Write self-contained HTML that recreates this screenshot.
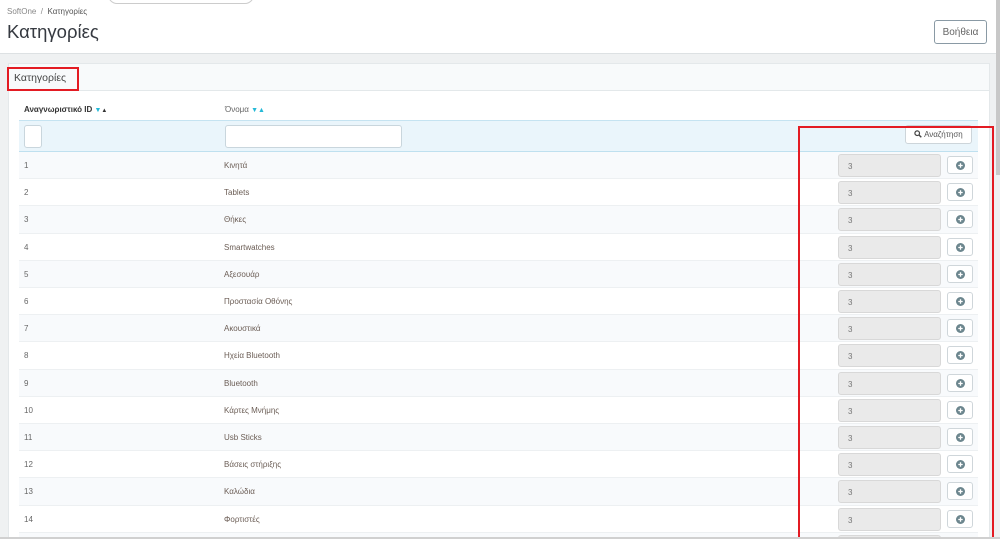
<!DOCTYPE html>
<html><head><meta charset="utf-8"><style>
*{box-sizing:border-box;margin:0;padding:0}
html,body{width:1000px;height:539px;overflow:hidden}
body{background:#eff1f2;font-family:"Liberation Sans",sans-serif;position:relative;color:#555}
.top{position:absolute;left:0;top:0;width:1000px;height:54px;background:#fff;border-bottom:1px solid #dde1e3}
.search{position:absolute;left:108px;top:-14px;width:146px;height:18px;border:1px solid #ccc;border-radius:9px;background:#fff}
.bc{position:absolute;left:7px;top:7px;font-size:8px;color:#888}
.bc b{font-weight:normal;color:#555}
h1{position:absolute;left:7px;top:21px;font-size:18.5px;font-weight:normal;color:#363a41}
.help{position:absolute;left:934px;top:20px;width:53px;height:24px;border:1px solid #8a9aa5;border-radius:3px;font-size:10px;color:#666;text-align:center;line-height:22px;background:#fff;padding-top:1px}
.sb{position:absolute;left:996px;top:0;width:4px;height:175px;background:#c8c8c8}
.panel{position:absolute;left:8px;top:63px;width:982px;height:480px;background:#fff;border:1px solid #e4e8ea}
.ph{position:absolute;left:9px;top:64px;width:980px;height:27px;background:#f8fafb;border-bottom:1px solid #e3e8ea}
.red1{position:absolute;left:7px;top:67px;width:72px;height:24px;border:2px solid #e31b23}
.lbl{position:absolute;left:14px;top:72px;font-size:10.5px;color:#444}
.th{position:absolute;top:105px;font-size:8px;color:#333;font-weight:bold}
.th i{font-style:normal;color:#25b9d7;font-size:7px}
.filt{position:absolute;left:19px;top:120px;width:959px;height:32px;background:#eaf5fb;border-top:1px solid #c5e3f1;border-bottom:1px solid #bfe0ef}
.in1{position:absolute;left:24px;top:125px;width:18px;height:23px;background:#fff;border:1px solid #c9d6dd;border-radius:3px}
.in2{position:absolute;left:225px;top:125px;width:177px;height:23px;background:#fff;border:1px solid #c9d6dd;border-radius:3px}
.sbtn{position:absolute;left:905px;top:125px;width:67px;height:19px;background:#fff;border:1px solid #cdd5da;border-radius:3px;font-size:8px;color:#555;line-height:17px;text-align:center}
.row{position:absolute;left:19px;width:959px;height:27.2px;border-bottom:1px solid #edf0f2;font-size:8px;color:#666}
.row.o{background:#f8fafc}
.row .id{position:absolute;left:5px;top:9px}
.row .nm{position:absolute;left:205px;top:9px;color:#6b5d55}
.row .v{position:absolute;left:819px;top:2px;width:103px;height:23px;background:#eaeaea;border:1px solid #d8d8d8;border-radius:3px;padding:7px 0 0 9px;color:#777}
.row .b{position:absolute;left:928px;top:4px;width:26px;height:18px;background:#fff;border:1px solid #cfd6da;border-radius:3px}
.row .b svg{position:absolute;left:8px;top:4px}
.red2{position:absolute;left:798px;top:126px;width:196px;height:430px;border:2px solid #e31b23}
.bot{position:absolute;left:0;top:537px;width:1000px;height:2px;background:#d0d0d0}
</style></head><body>
<div class="top"><div class="search"></div>
<div class="bc">SoftOne &nbsp;/&nbsp; <b>Κατηγορίες</b></div>
<h1>Κατηγορίες</h1>
<div class="help">Βοήθεια</div></div>
<div class="sb"></div>
<div class="panel"></div>
<div class="ph"></div>
<div class="lbl">Κατηγορίες</div>
<div class="red1"></div>
<div class="th" style="left:24px">Αναγνωριστικό ID <i>▼</i><span style="font-size:6px">▲</span></div>
<div class="th" style="left:225px;font-weight:normal;color:#666">Όνομα <i>▼▲</i></div>
<div class="filt"></div>
<div class="in1"></div><div class="in2"></div>
<div class="sbtn"><svg width="8" height="8" viewBox="0 0 8 8" style="vertical-align:-1px"><circle cx="3.2" cy="3.2" r="2.3" fill="none" stroke="#444" stroke-width="1.2"/><path d="M5 5L7.3 7.3" stroke="#444" stroke-width="1.4"/></svg> Αναζήτηση</div>
<div id="rows"></div>
<div class="row o" style="top:152px"><span class="id">1</span><span class="nm">Κινητά</span><div class="v">3</div><div class="b"><svg width="9" height="9"><circle cx="4.5" cy="4.5" r="4.5" fill="#6c868e"/><path d="M2.3 4.5h4.4M4.5 2.3v4.4" stroke="#fff" stroke-width="1.3"/></svg></div></div>
<div class="row" style="top:179.2px"><span class="id">2</span><span class="nm">Tablets</span><div class="v">3</div><div class="b"><svg width="9" height="9"><circle cx="4.5" cy="4.5" r="4.5" fill="#6c868e"/><path d="M2.3 4.5h4.4M4.5 2.3v4.4" stroke="#fff" stroke-width="1.3"/></svg></div></div>
<div class="row o" style="top:206.4px"><span class="id">3</span><span class="nm">Θήκες</span><div class="v">3</div><div class="b"><svg width="9" height="9"><circle cx="4.5" cy="4.5" r="4.5" fill="#6c868e"/><path d="M2.3 4.5h4.4M4.5 2.3v4.4" stroke="#fff" stroke-width="1.3"/></svg></div></div>
<div class="row" style="top:233.6px"><span class="id">4</span><span class="nm">Smartwatches</span><div class="v">3</div><div class="b"><svg width="9" height="9"><circle cx="4.5" cy="4.5" r="4.5" fill="#6c868e"/><path d="M2.3 4.5h4.4M4.5 2.3v4.4" stroke="#fff" stroke-width="1.3"/></svg></div></div>
<div class="row o" style="top:260.8px"><span class="id">5</span><span class="nm">Αξεσουάρ</span><div class="v">3</div><div class="b"><svg width="9" height="9"><circle cx="4.5" cy="4.5" r="4.5" fill="#6c868e"/><path d="M2.3 4.5h4.4M4.5 2.3v4.4" stroke="#fff" stroke-width="1.3"/></svg></div></div>
<div class="row" style="top:288px"><span class="id">6</span><span class="nm">Προστασία Οθόνης</span><div class="v">3</div><div class="b"><svg width="9" height="9"><circle cx="4.5" cy="4.5" r="4.5" fill="#6c868e"/><path d="M2.3 4.5h4.4M4.5 2.3v4.4" stroke="#fff" stroke-width="1.3"/></svg></div></div>
<div class="row o" style="top:315.2px"><span class="id">7</span><span class="nm">Ακουστικά</span><div class="v">3</div><div class="b"><svg width="9" height="9"><circle cx="4.5" cy="4.5" r="4.5" fill="#6c868e"/><path d="M2.3 4.5h4.4M4.5 2.3v4.4" stroke="#fff" stroke-width="1.3"/></svg></div></div>
<div class="row" style="top:342.4px"><span class="id">8</span><span class="nm">Ηχεία Bluetooth</span><div class="v">3</div><div class="b"><svg width="9" height="9"><circle cx="4.5" cy="4.5" r="4.5" fill="#6c868e"/><path d="M2.3 4.5h4.4M4.5 2.3v4.4" stroke="#fff" stroke-width="1.3"/></svg></div></div>
<div class="row o" style="top:369.6px"><span class="id">9</span><span class="nm">Bluetooth</span><div class="v">3</div><div class="b"><svg width="9" height="9"><circle cx="4.5" cy="4.5" r="4.5" fill="#6c868e"/><path d="M2.3 4.5h4.4M4.5 2.3v4.4" stroke="#fff" stroke-width="1.3"/></svg></div></div>
<div class="row" style="top:396.8px"><span class="id">10</span><span class="nm">Κάρτες Μνήμης</span><div class="v">3</div><div class="b"><svg width="9" height="9"><circle cx="4.5" cy="4.5" r="4.5" fill="#6c868e"/><path d="M2.3 4.5h4.4M4.5 2.3v4.4" stroke="#fff" stroke-width="1.3"/></svg></div></div>
<div class="row o" style="top:424px"><span class="id">11</span><span class="nm">Usb Sticks</span><div class="v">3</div><div class="b"><svg width="9" height="9"><circle cx="4.5" cy="4.5" r="4.5" fill="#6c868e"/><path d="M2.3 4.5h4.4M4.5 2.3v4.4" stroke="#fff" stroke-width="1.3"/></svg></div></div>
<div class="row" style="top:451.2px"><span class="id">12</span><span class="nm">Βάσεις στήριξης</span><div class="v">3</div><div class="b"><svg width="9" height="9"><circle cx="4.5" cy="4.5" r="4.5" fill="#6c868e"/><path d="M2.3 4.5h4.4M4.5 2.3v4.4" stroke="#fff" stroke-width="1.3"/></svg></div></div>
<div class="row o" style="top:478.4px"><span class="id">13</span><span class="nm">Καλώδια</span><div class="v">3</div><div class="b"><svg width="9" height="9"><circle cx="4.5" cy="4.5" r="4.5" fill="#6c868e"/><path d="M2.3 4.5h4.4M4.5 2.3v4.4" stroke="#fff" stroke-width="1.3"/></svg></div></div>
<div class="row" style="top:505.6px"><span class="id">14</span><span class="nm">Φορτιστές</span><div class="v">3</div><div class="b"><svg width="9" height="9"><circle cx="4.5" cy="4.5" r="4.5" fill="#6c868e"/><path d="M2.3 4.5h4.4M4.5 2.3v4.4" stroke="#fff" stroke-width="1.3"/></svg></div></div>
<div class="row o" style="top:532.8px"><div class="v"></div><div class="b"></div></div>
<div class="red2"></div>
<div class="bot"></div>
</body></html>
